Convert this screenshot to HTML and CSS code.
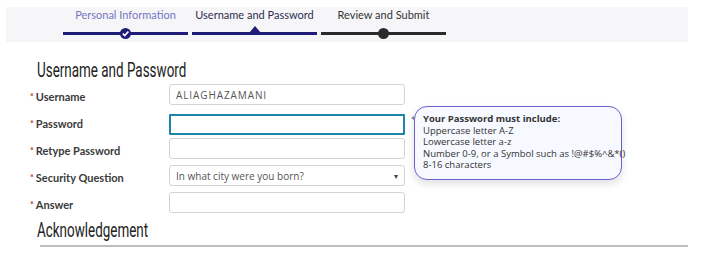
FILE: index.html
```html
<!DOCTYPE html>
<html lang="en">
<head>
    <meta charset="UTF-8">
    <title>Registration - Username and Password</title>
    <link rel="stylesheet" href="styles.css">
</head>
<body>

    <div class="stepper">
        <div class="step done">
            <span class="step-name">Personal Information</span>
            <div class="step-line">
                <svg class="mark" width="11" height="11" viewBox="0 0 11 11">
                    <circle cx="5.5" cy="5.5" r="5.5" fill="#1f1d78"/>
                    <path d="M2.8 5.6 L4.8 7.6 L8.4 3.4" stroke="#fff" stroke-width="1.6" fill="none"/>
                </svg>
            </div>
        </div>
        <div class="step current">
            <span class="step-name">Username and Password</span>
            <div class="step-line">
                <svg class="mark arrow" width="12" height="7" viewBox="0 0 12 7">
                    <path d="M0 7 L6 0 L12 7 Z" fill="#1f1d78"/>
                </svg>
            </div>
        </div>
        <div class="step todo">
            <span class="step-name">Review and Submit</span>
            <div class="step-line">
                <span class="dot"></span>
            </div>
        </div>
    </div>

    <div class="section">
        <h2 class="section-title"><span>Username and Password</span></h2>

        <form class="fields">
            <label class="field-label" for="username">Username</label>
            <input class="field caps" type="text" id="username" value="ALIAGHAZAMANI">

            <label class="field-label" for="password">Password</label>
            <div class="field-wrap">
                <input class="field focus" type="password" id="password">
                <div class="hint">
                    <b>Your Password must include:</b><br>
                    Uppercase letter A-Z<br>
                    Lowercase letter a-z<br>
                    Number 0-9, or a Symbol such as !@#$%^&amp;*()<br>
                    8-16 characters
                </div>
            </div>

            <label class="field-label" for="retype">Retype Password</label>
            <input class="field" type="password" id="retype">

            <label class="field-label" for="question">Security Question</label>
            <div class="select">
                <span>In what city were you born?</span>
                <span class="caret">&#9662;</span>
            </div>

            <label class="field-label" for="answer">Answer</label>
            <input class="field" type="text" id="answer">
        </form>

        <h2 class="section-title ack"><span>Acknowledgement</span></h2>
    </div>

</body>
</html>
```

FILE: styles.css
```css
body {
    margin: 0;
    background: #fff;
    font-family: "Open Sans", sans-serif;
    color: #333;
    width: 720px;
    height: 254px;
    overflow: hidden;
}
.stepper {
    margin: 7px 32px 0 6px;
    height: 35px;
    background: #f6f6f9;
    padding-left: 57px;
    display: flex;
    gap: 4px;
}
.step {
    width: 125px;
    display: flex;
    flex-direction: column;
    align-items: center;
}
.step-name {
    font-family: "Lato", sans-serif;
    font-size: 11px;
    line-height: 14px;
    margin-top: 1px;
    white-space: nowrap;
}
.done .step-name {
    color: #7575c2;
}
.current .step-name {
    color: #2d2d4f;
}
.todo .step-name {
    color: #333;
}
.step-line {
    position: relative;
    width: 100%;
    height: 3px;
    margin-top: 10px;
    background: #1f1d78;
}
.todo .step-line {
    background: #2b2b2b;
}
.mark {
    position: absolute;
    left: 57px;
    top: -4px;
}
.mark.arrow {
    top: -6px;
    left: 57px;
}
.dot {
    position: absolute;
    left: 57px;
    top: -4px;
    width: 11px;
    height: 11px;
    border-radius: 50%;
    background: #2b2b2b;
}
.section {
    padding-left: 30px;
    position: relative;
}
.section-title {
    margin: 16px 0 0 7px;
    font-family: "Roboto", sans-serif;
    font-weight: normal;
    font-size: 21px;
    line-height: 24px;
    color: #222;
    height: 24px;
}
.section-title span {
    display: inline-block;
    transform: scaleX(0.64);
    transform-origin: left center;
    white-space: nowrap;
}
.fields {
    display: grid;
    grid-template-columns: 139px 236px;
    grid-auto-rows: 21px;
    row-gap: 6px;
    margin-top: 2px;
}
.field-label {
    font-family: "Lato", sans-serif;
    font-size: 11px;
    font-weight: bold;
    color: #3a3a3a;
    padding-top: 6px;
    line-height: 14px;
}
.field-label::before {
    content: "*";
    color: #c0303a;
    font-size: 9px;
    margin-right: 2px;
    position: relative;
    top: -1px;
}
.field, .select {
    box-sizing: border-box;
    width: 236px;
    height: 21px;
    border: 1px solid #d3d3d3;
    border-radius: 3px;
    background: #fff;
    padding: 0 6px;
    font-family: "Open Sans", sans-serif;
    font-size: 10px;
    color: #555;
    margin: 0;
}
.field.caps {
    letter-spacing: 0.9px;
}
.field.focus {
    border: 2px solid #1d86a8;
    border-radius: 1px;
}
.field-wrap {
    position: relative;
}
.field-wrap::after {
    content: "";
    position: absolute;
    left: 240px;
    top: 5px;
    border: 2px solid transparent;
    border-right: 3px solid #888;
}
.hint {
    position: absolute;
    left: 245px;
    top: -5px;
    width: 190px;
    height: 60px;
    padding: 6px 8px 6px 8px;
    border: 1.5px solid #6c5fd0;
    border-radius: 13px;
    background: #f6f9ff;
    box-shadow: 0 4px 8px rgba(0, 0, 0, 0.12);
    font-size: 9.5px;
    line-height: 11.5px;
    color: #333;
    white-space: nowrap;
    z-index: 2;
}
.select {
    display: flex;
    align-items: center;
    justify-content: space-between;
}
.caret {
    font-size: 8px;
    color: #444;
}
.section-title.ack {
    margin-top: 5px;
    padding-bottom: 3px;
    border-bottom: 2px solid #bdbdbd;
    margin-right: 32px;
    margin-left: 10px;
}
.section-title.ack span {
    margin-left: -3px;
}
```
